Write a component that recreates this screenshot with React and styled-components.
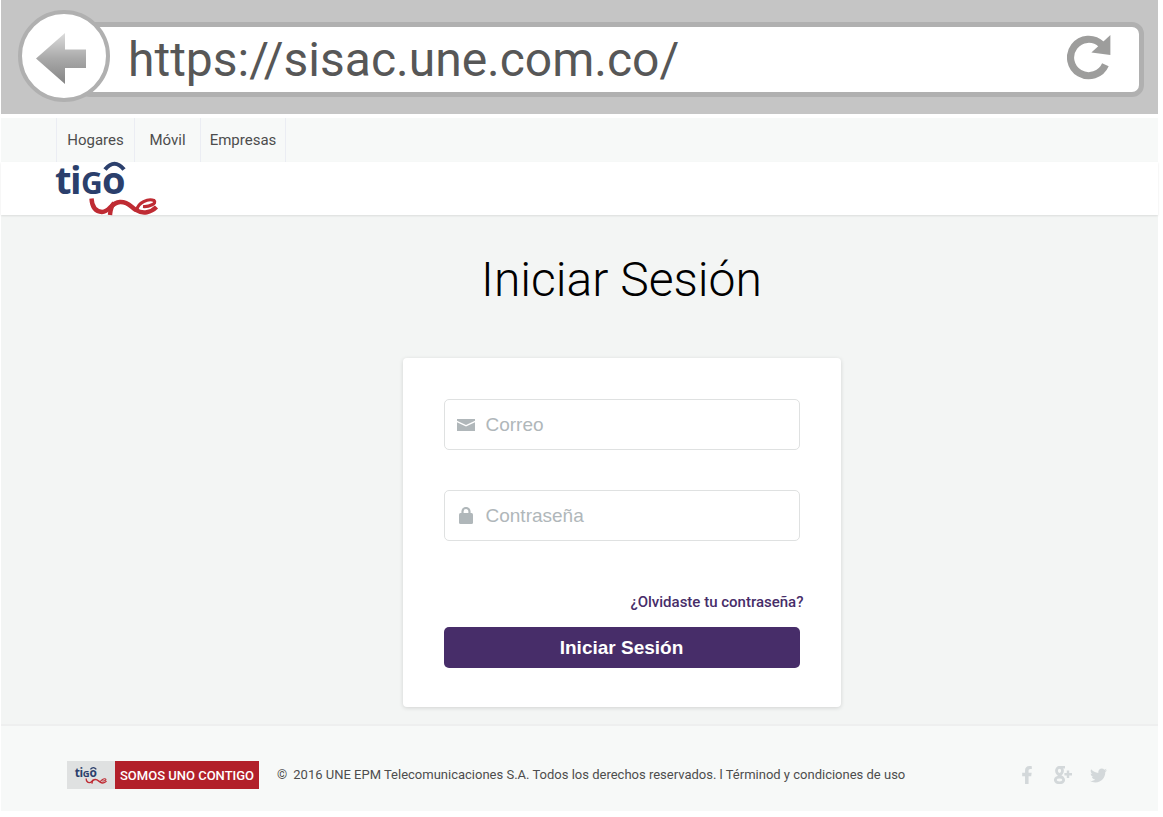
import { useState } from 'react';
import styled, { createGlobalStyle } from 'styled-components';
import { FaFacebookF, FaTwitter } from 'react-icons/fa';

const navItems = [
  { label: 'Hogares', width: 78 },
  { label: 'Móvil', width: 66 },
  { label: 'Empresas', width: 86 },
];

function BackArrow() {
  return (
    <svg width="50" height="51" viewBox="0 0 50 51" aria-hidden="true">
      <defs>
        <linearGradient id="arrowFill" x1="0" y1="0" x2="0" y2="1">
          <stop offset="0" stopColor="#dcdcdc" />
          <stop offset="0.5" stopColor="#a9a9a9" />
          <stop offset="1" stopColor="#858585" />
        </linearGradient>
      </defs>
      <path d="M0 25.5 L29 0 V16.5 H50 V35 H29 V51 Z" fill="url(#arrowFill)" />
    </svg>
  );
}

function ReloadIcon() {
  return (
    <svg width="44" height="45" viewBox="0 0 44 45" aria-hidden="true">
      <path d="M34.4 9.4 A18.2 18.2 0 1 0 38.4 29.8" fill="none" stroke="#9d9d9c" strokeWidth="7.2" />
      <path d="M43.4 0 V20 L24.4 17.5 Z" fill="#9d9d9c" />
    </svg>
  );
}

function TigoLogo({ width }) {
  return (
    <LogoSvg width={width} viewBox="0 0 102 53" role="img" aria-label="tigo une">
      <g fill="#2b3f6c" fontFamily="'Open Sans', sans-serif" fontWeight="700">
        <text y="32" fontSize="38" x="-1 14">ti</text>
        <text y="32" fontSize="30" x="25">G</text>
        <text y="32" fontSize="38" x="46">o</text>
      </g>
      <path d="M49 7.5 Q58.5 -4 68 7.5" fill="none" stroke="#2b3f6c" strokeWidth="4.2" />
      <g fill="none" stroke="#bf2b33">
        <path strokeWidth="4.4" d="M35.5 36.5 C36 45 40 49.5 46 50 C54 50 54 41 64 40 C72 39.5 75 45 80 48 C87 52.5 95 50.5 100.500 45" />
        <path strokeWidth="3.2" d="M81 47.5 C82 41 92 36 98 38.5 C101.500 41.5 93 45 87 44.5" />
        <path strokeWidth="4.4" d="M58 41 C54.500 45 54.500 49 54 53" />
      </g>
    </LogoSvg>
  );
}

function GooglePlusIcon() {
  return (
    <svg width="18" height="18" viewBox="0 0 18 18" fill="none" stroke="currentColor" aria-hidden="true">
      <ellipse cx="5.500" cy="4.800" rx="3" ry="3.500" strokeWidth="2.800" />
      <ellipse cx="5.500" cy="14" rx="4.200" ry="2.800" strokeWidth="2.800" />
      <path d="M5.500 1.200 H11 M5 8 C3.500 10 8 10 9 12" strokeWidth="2.400" />
      <path d="M14 4.500 V12 M10.400 8.300 H18" strokeWidth="2.400" />
    </svg>
  );
}

function MailIcon() {
  return (
    <svg width="18" height="12" viewBox="0 0 18 12" fill="#b0b7ba" aria-hidden="true">
      <path d="M0 0 H18 V1.800 L9 6 L0 1.800 Z" />
      <path d="M0 3.300 L9 7.500 L18 3.300 V12 H0 Z" />
    </svg>
  );
}

function LockIcon() {
  return (
    <svg width="18" height="17" viewBox="0 0 18 17" aria-hidden="true">
      <rect x="2" y="6" width="14" height="11" rx="1.500" fill="#b0b7ba" />
      <path d="M5.500 7 V4.500 A3.500 3.500 0 0 1 12.500 4.500 V7" fill="none" stroke="#b0b7ba" strokeWidth="2.200" />
    </svg>
  );
}

function App() {
  const [url, setUrl] = useState('https://sisac.une.com.co/');
  const [email, setEmail] = useState('');
  const [password, setPassword] = useState('');

  const handleSubmit = (e) => {
    e.preventDefault();
  };

  return (
    <>
      <GlobalStyle />
      <Page>
        <BrowserBar>
          <BackButton type="button" aria-label="Atrás">
            <BackArrow />
          </BackButton>
          <AddressField>
            <AddressInput
              type="text"
              aria-label="Dirección"
              value={url}
              onChange={(e) => setUrl(e.target.value)}
            />
            <ReloadButton type="button" aria-label="Recargar">
              <ReloadIcon />
            </ReloadButton>
          </AddressField>
        </BrowserBar>

        <Nav>
          {navItems.map((item) => (
            <NavLink href="#" key={item.label} $width={item.width}>
              {item.label}
            </NavLink>
          ))}
        </Nav>

        <Header>
          <TigoLogo width={102} />
        </Header>

        <Main>
          <Title>Iniciar Sesión</Title>
          <Card onSubmit={handleSubmit}>
            <Field>
              <MailIcon />
              <FieldInput
                type="email"
                aria-label="Correo"
                placeholder="Correo"
                value={email}
                onChange={(e) => setEmail(e.target.value)}
              />
            </Field>
            <Field>
              <LockIcon />
              <FieldInput
                type="password"
                aria-label="Contraseña"
                placeholder="Contraseña"
                value={password}
                onChange={(e) => setPassword(e.target.value)}
              />
            </Field>
            <ForgotLink href="#">¿Olvidaste tu contraseña?</ForgotLink>
            <SubmitButton type="submit">Iniciar Sesión</SubmitButton>
          </Card>
        </Main>

        <Footer>
          <Badge>
            <BadgeLogo>
              <TigoLogo width={32} />
            </BadgeLogo>
            <BadgeText>SOMOS UNO CONTIGO</BadgeText>
          </Badge>
          <Legal>
            <span>©</span>
            <span>
              2016 UNE EPM Telecomunicaciones S.A. Todos los derechos reservados. l Términod y condiciones de uso
            </span>
          </Legal>
          <Social>
            <SocialLink href="#" aria-label="Facebook"><FaFacebookF size={18} /></SocialLink>
            <SocialLink href="#" aria-label="Google Plus"><GooglePlusIcon /></SocialLink>
            <SocialLink href="#" aria-label="Twitter"><FaTwitter size={17} /></SocialLink>
          </Social>
        </Footer>
      </Page>
    </>
  );
}

const GlobalStyle = createGlobalStyle`
  * {
    box-sizing: border-box;
  }

  body {
    margin: 0;
    background-color: #fff;
    font-family: Roboto, sans-serif;
    color: #4d4d4d;
  }

  svg {
    display: block;
    flex-shrink: 0;
  }
`;

const Page = styled.div`
  margin: 0 5px 0 1px;
`;

const LogoSvg = styled.svg`
  overflow: visible;
`;

const BrowserBar = styled.div`
  display: flex;
  align-items: center;
  padding: 10px 14px 12px 17px;
  margin-bottom: 4px;
  background-color: #c5c5c5;
`;

const BackButton = styled.button`
  display: flex;
  align-items: center;
  justify-content: center;
  flex-shrink: 0;
  width: 92px;
  height: 92px;
  padding: 4px 6px 0 0;
  border: 4px solid #b0b0b0;
  border-radius: 50%;
  background-color: #fff;
  z-index: 1;
  cursor: pointer;
`;

const AddressField = styled.div`
  display: flex;
  align-items: center;
  flex: 1;
  height: 75px;
  margin: 7px 0 0 -32px;
  padding: 0 28px 0 45px;
  border: 5px solid #b0b0b0;
  border-radius: 12px;
  background-color: #fff;
`;

const AddressInput = styled.input`
  flex: 1;
  min-width: 0;
  padding: 0;
  border: none;
  background-color: transparent;
  font-family: Roboto, sans-serif;
  font-size: 48px;
  color: #575757;
  outline: none;
`;

const ReloadButton = styled.button`
  padding: 0 0 4px;
  border: none;
  background-color: transparent;
  cursor: pointer;
`;

const Nav = styled.nav`
  display: flex;
  height: 44px;
  padding-left: 55px;
  background-color: #f7f9f8;
`;

const NavLink = styled.a`
  width: ${({ $width }) => $width}px;
  border-left: 1px solid #ebedf3;
  font-size: 15px;
  line-height: 44px;
  text-align: center;
  text-decoration: none;
  color: #4d4d4d;

  &:last-child {
    border-right: 1px solid #ebedf3;
  }
`;

const Header = styled.header`
  position: relative;
  padding-left: 55px;
  background-color: #fff;
  box-shadow: 0 1px 2px rgba(0, 0, 0, 0.1);
`;

const Main = styled.main`
  display: flex;
  flex-direction: column;
  align-items: center;
  padding: 33px 0 17px 84px;
  background-color: #f3f5f4;
`;

const Title = styled.h1`
  margin: 0 0 46px;
  font-size: 48px;
  font-weight: 300;
  line-height: 64px;
  color: #000;
`;

const Card = styled.form`
  display: flex;
  flex-direction: column;
  width: 100%;
  max-width: 438px;
  padding: 41px 41px 39px;
  border-radius: 4px;
  background-color: #fff;
  box-shadow: 0 1px 4px rgba(0, 0, 0, 0.14);
`;

const Field = styled.label`
  display: flex;
  align-items: center;
  gap: 11px;
  height: 51px;
  margin-bottom: 40px;
  padding: 0 12px;
  border: 1px solid #dfe1e1;
  border-radius: 5px;
`;

const FieldInput = styled.input`
  flex: 1;
  min-width: 0;
  padding: 0;
  border: none;
  background-color: transparent;
  font-family: 'Liberation Sans', Arial, sans-serif;
  font-size: 19px;
  color: #4d4d4d;
  outline: none;

  &::placeholder {
    color: #b0b7ba;
    opacity: 1;
  }
`;

const ForgotLink = styled.a`
  align-self: flex-end;
  margin: 11px -4px 15px 0;
  font-size: 15px;
  font-weight: 500;
  line-height: 20px;
  text-decoration: none;
  color: #472d69;
`;

const SubmitButton = styled.button`
  height: 41px;
  border: none;
  border-radius: 5px;
  background-color: #472d69;
  font-family: 'Liberation Sans', Arial, sans-serif;
  font-size: 19px;
  font-weight: 700;
  color: #fff;
  cursor: pointer;
`;

const Footer = styled.footer`
  display: flex;
  align-items: center;
  padding: 35px 51px 22px 66px;
  border-top: 2px solid #eeefef;
  background-color: #f7f9f8;
`;

const Badge = styled.div`
  display: flex;
  height: 28px;
`;

const BadgeLogo = styled.div`
  display: flex;
  align-items: center;
  padding: 0 8px;
  background-color: #dfe1e1;
`;

const BadgeText = styled.div`
  padding: 0 5px;
  background-color: #b2202a;
  font-size: 13px;
  font-weight: 500;
  line-height: 30px;
  color: #fff;
`;

const Legal = styled.div`
  display: flex;
  gap: 6px;
  margin-left: 18px;
  font-size: 13px;
  line-height: 22px;
`;

const Social = styled.div`
  display: flex;
  align-items: center;
  gap: 18px;
  margin-left: auto;
`;

const SocialLink = styled.a`
  color: #d3d8da;
`;

export default App;
